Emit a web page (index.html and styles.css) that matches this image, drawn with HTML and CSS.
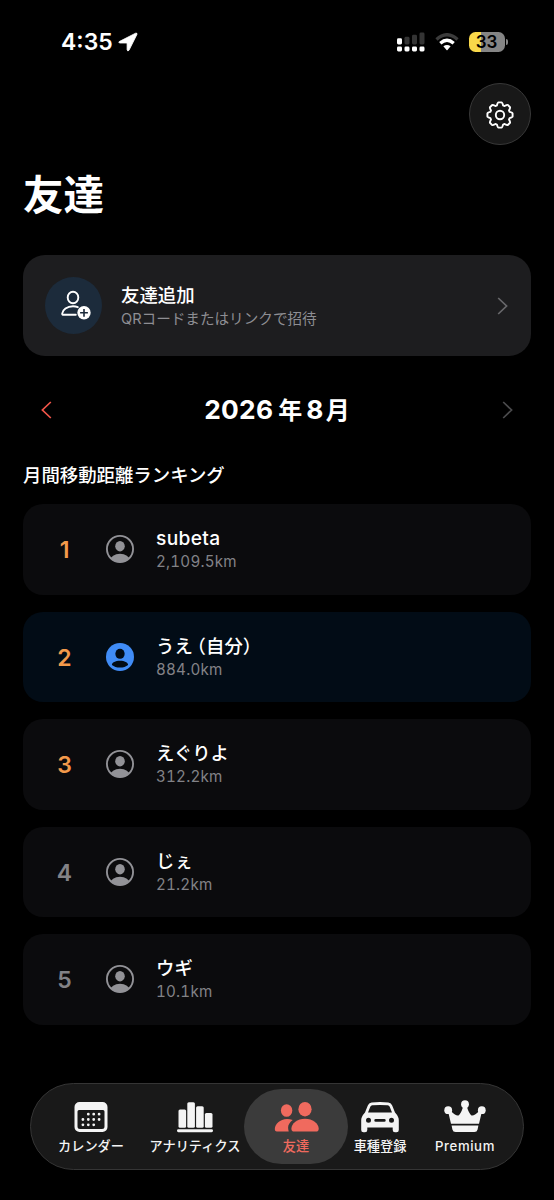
FILE: index.html
```html
<!DOCTYPE html>
<html lang="ja">
<head>
<meta charset="utf-8">
<meta name="viewport" content="width=device-width">
<title>友達</title>
<link rel="stylesheet" href="styles.css">
</head>
<body>
<svg width="0" height="0" class="defs">
  <symbol id="person-outline" viewBox="0 0 27 27">
    <clipPath id="avatar-clip"><circle cx="13.5" cy="13.5" r="12.7"/></clipPath>
    <circle cx="13.5" cy="13.5" r="12.6" fill="none" stroke="currentColor" stroke-width="1.8"/>
    <g clip-path="url(#avatar-clip)" fill="currentColor"><ellipse cx="13.5" cy="10.8" rx="4.6" ry="5"/><ellipse cx="13.5" cy="24.5" rx="9.4" ry="6.3"/></g>
  </symbol>
  <symbol id="person-filled" viewBox="0 0 27 27">
    <circle cx="13.5" cy="13.5" r="13.5" fill="currentColor"/>
    <g fill="#020c16"><ellipse cx="13.5" cy="10.4" rx="4.5" ry="4.9"/><path d="M5.7 21.2c0-2.4 3.4-4 7.8-4s7.8 1.6 7.8 4c-2 1.600-4.500 2.500-7.800 2.500s-5.800-.9-7.800-2.500z"/></g>
  </symbol>
</svg>
<div class="screen">
  <header class="status">
    <div class="clock">4:35
      <svg class="location" width="20" height="20" viewBox="0 0 20 20"><path d="M1.200 9.600 17.600 1.200q1.900-.5 1.300 1.300L11 18.300q-1.400 1.600-1.900-.6V11.800q0-.8-.8-.8H2q-2-.3-.8-1.400z" fill="#fff" stroke="#fff" stroke-width=".8" stroke-linejoin="round"/></svg>
    </div>
    <div class="indicators">
      <svg width="28" height="20" viewBox="0 0 28 20">
        <g fill="#fff"><rect y="14.500" width="5" height="5" rx="1.400"/><rect x="7.500" y="14.500" width="5" height="5" rx="1.400"/><rect x="15" y="14.500" width="5" height="5" rx="1.400"/><rect x="22.500" y="14.500" width="5" height="5" rx="1.400"/><rect y="6.200" width="5" height="6.200" rx="1.400"/></g>
        <g fill="#343434"><rect x="7.500" y="4.800" width="5" height="7.600" rx="1.400"/><rect x="15" y="2.800" width="5" height="9.600" rx="1.400"/><rect x="22.500" y=".5" width="5" height="11.900" rx="1.400"/></g>
      </svg>
      <svg width="24" height="18" viewBox="0 0 24 18" fill="none">
        <path d="M1.500 6.400Q12-3 22.500 6.400" stroke="#3b3b3b" stroke-width="3.300"/>
        <path d="M5.300 10.300Q12 4.300 18.700 10.300" stroke="#fff" stroke-width="3.300"/>
        <path d="M8.400 13.300Q12 10.600 15.600 13.300L12.500 16.900q-.5.500-1 0z" fill="#fff"/>
      </svg>
      <div class="battery"><span class="battery-body">33</span><span class="battery-tip"></span></div>
    </div>
  </header>

  <div class="toolbar">
    <button class="settings" aria-label="設定">
      <svg width="28" height="28" viewBox="-14 -14 28 28" fill="none" stroke="#fff" stroke-width="1.900" stroke-linejoin="round">
        <path d="M-3.100-9.600Q-2.300-12.600-1.600-12.600H1.600Q2.300-12.600 3.100-9.600L4.600-8.980Q7.300-10.540 7.780-10.040L10.040-7.780Q10.540-7.300 8.980-4.600L9.600-3.100Q12.600-2.300 12.600-1.600V1.600Q12.600 2.300 9.600 3.100L8.980 4.600Q10.540 7.300 10.040 7.780L7.780 10.040Q7.300 10.540 4.600 8.980L3.100 9.600Q2.300 12.600 1.600 12.600H-1.600Q-2.300 12.600-3.100 9.600L-4.600 8.980Q-7.300 10.540-7.780 10.040L-10.040 7.780Q-10.540 7.300-8.980 4.600L-9.600 3.100Q-12.600 2.300-12.600 1.600V-1.600Q-12.600-2.300-9.600-3.100L-8.980-4.600Q-10.540-7.300-10.040-7.780L-7.780-10.040Q-7.300-10.540-4.600-8.980Z"/>
        <circle r="4.200"/>
      </svg>
    </button>
  </div>

  <h1 class="title">友達</h1>

  <a class="invite">
    <span class="invite-icon">
      <svg width="32" height="32" viewBox="0 0 32 32" fill="none" stroke="#fff" stroke-width="1.900">
        <ellipse cx="13" cy="7.500" rx="5.300" ry="5.800"/>
        <path d="M17.800 17.200Q15.600 16.200 13 16.200C7 16.200 2.500 20 2.200 23.500Q2.100 24.800 3.500 24.800H15.800" stroke-linecap="round"/>
        <circle cx="24" cy="22.800" r="6.700" fill="#fff" stroke="none"/>
        <path d="M24 18.900v7.800M20.100 22.800h7.800" stroke="#1c2b3b" stroke-width="1.600"/>
      </svg>
    </span>
    <span class="invite-text"><strong>友達追加</strong><small>QRコードまたはリンクで招待</small></span>
    <svg class="chevron" width="11" height="18" viewBox="0 0 11 18"><path d="M1.200 1 9.600 9 1.200 17"/></svg>
  </a>

  <nav class="month">
    <svg class="chevron previous" width="11" height="18" viewBox="0 0 11 18"><path d="M9.800 1 1.400 9 9.800 17"/></svg>
    <h2><span>2026</span><span class="unit year">年</span><span>8</span><span class="unit">月</span></h2>
    <svg class="chevron next" width="11" height="18" viewBox="0 0 11 18"><path d="M1.200 1 9.600 9 1.200 17"/></svg>
  </nav>

  <h3 class="section-title">月間移動距離ランキング</h3>
  <ol class="ranking">
    <li class="entry top"><span class="rank">1</span><svg class="avatar"><use href="#person-outline"/></svg><div class="person"><strong class="latin-name">subeta</strong><small>2,109.5km</small></div></li>
    <li class="entry top self"><span class="rank">2</span><svg class="avatar"><use href="#person-filled"/></svg><div class="person"><strong>うえ<span class="paren">（</span>自分<span class="paren-end">）</span></strong><small>884.0km</small></div></li>
    <li class="entry top"><span class="rank">3</span><svg class="avatar"><use href="#person-outline"/></svg><div class="person"><strong>えぐりよ</strong><small>312.2km</small></div></li>
    <li class="entry"><span class="rank">4</span><svg class="avatar"><use href="#person-outline"/></svg><div class="person"><strong>じぇ</strong><small>21.2km</small></div></li>
    <li class="entry"><span class="rank">5</span><svg class="avatar"><use href="#person-outline"/></svg><div class="person"><strong>ウギ</strong><small>10.1km</small></div></li>
  </ol>

  <nav class="tabs">
    <a class="tab">
      <svg width="46" height="34" viewBox="0 0 46 34">
        <path fill-rule="evenodd" fill="#f4f4f4" d="M11.500 2h23a5 5 0 0 1 5 5v20a5 5 0 0 1-5 5h-23a5 5 0 0 1-5-5V7a5 5 0 0 1 5-5zM9.500 11.500V26.500a2.500 2.500 0 0 0 2.500 2.500h22a2.500 2.500 0 0 0 2.500-2.500V11.500q0-1.500-1.500-1.500H11q-1.500 0-1.500 1.500z"/>
        <path d="M20.300 14.200h.01M25.700 14.200h.01M31.100 14.200h.01M14.900 19.500h.01M20.300 19.500h.01M25.700 19.500h.01M31.100 19.500h.01M14.900 24.800h.01M20.300 24.800h.01M25.700 24.800h.01" stroke="#f4f4f4" stroke-width="2.800" stroke-linecap="round"/>
      </svg><span>カレンダー</span>
    </a>
    <a class="tab">
      <svg width="46" height="34" viewBox="0 0 46 34" fill="#f4f4f4"><rect x="6.500" y="9.500" width="7.600" height="18.300" rx="1.500"/><rect x="15.300" y="2.200" width="7.600" height="25.600" rx="1.500"/><rect x="24.100" y="6.200" width="7.600" height="21.600" rx="1.500"/><rect x="32.900" y="13" width="7.600" height="14.800" rx="1.500"/><rect x="5" y="29.300" width="36" height="2.900" rx="1.400"/></svg>
      <span>アナリティクス</span>
    </a>
    <a class="tab active">
      <svg width="46" height="34" viewBox="0 0 46 34" fill="#f06a5e"><ellipse cx="13.600" cy="10.500" rx="5.700" ry="6.300"/><ellipse cx="32" cy="9.200" rx="6.600" ry="7.200"/><path d="M14 18.900q3 0 5.700 1.100-4.600 3.600-4.600 7.600 0 1.700.6 4H3.800Q1.800 31.600 1.800 29.200C1.800 24 7 18.900 14 18.900z"/><path d="M32 18.700c7.500 0 13.700 5 13.700 9.800 0 2.200-.7 3.100-2.900 3.100H21.300c-2.200 0-2.900-.9-2.900-3.100 0-4.800 6-9.800 13.600-9.800z"/></svg>
      <span>友達</span>
    </a>
    <a class="tab">
      <svg width="46" height="34" viewBox="0 0 46 34" fill="#f4f4f4"><path fill-rule="evenodd" d="M10.700 5.700Q11.700 2.900 14.600 2.400Q23 1.500 31.400 2.400Q34.300 2.900 35.300 5.700L38 12.500Q41.800 16.700 41.800 20V30q0 2.300-2.300 2.300H38q-2.300 0-2.300-2.300V27.500H10.300V30q0 2.300-2.300 2.300H6.500Q4.200 32.300 4.200 30V20Q4.200 16.700 8 12.500zM13.300 6.700 11 12.500H35L32.700 6.700Q32.200 5.300 30.700 5.200Q23 4.600 15.300 5.200Q13.800 5.300 13.300 6.700zM11.500 17.800a2.500 2.500 0 1 0 0 5 2.500 2.500 0 1 0 0-5zM34.500 17.800a2.500 2.500 0 1 0 0 5 2.500 2.500 0 1 0 0-5zM18.700 19a1.400 1.400 0 0 0 0 2.800h8.600a1.400 1.400 0 0 0 0-2.800z"/></svg>
      <span>車種登録</span>
    </a>
    <a class="tab">
      <svg width="46" height="34" viewBox="0 0 46 34" fill="#f4f4f4"><circle cx="23" cy="4.200" r="3.900"/><circle cx="6.200" cy="10.200" r="3.900"/><circle cx="39.800" cy="10.200" r="3.900"/><path d="M21.200 6.500h3.600Q27 13.800 29.500 15.400Q32 16.200 36.700 11.500L39.500 13.300 37 23.800H9L6.500 13.300 9.300 11.500Q14 16.200 16.500 15.400Q19 13.800 21.200 6.500zM9.600 25.500h26.800l-.8 4Q35 32 32.400 32H13.600Q11 32 10.400 29.500z"/></svg>
      <span class="latin">Premium</span>
    </a>
  </nav>
</div>
</body>
</html>
```

FILE: styles.css
```css
* { box-sizing: border-box; }
body {
  margin: 0;
  background: #000;
  color: #fff;
  font-family: Inter, "Noto Sans CJK JP", sans-serif;
}
.defs { display: block; height: 0; }
.screen {
  width: 554px;
  height: 1200px;
  padding: 0 23px;
  display: flex;
  flex-direction: column;
}
.status {
  height: 83px;
  padding: 0 23px 0 38px;
  display: flex;
  align-items: center;
  justify-content: space-between;
}
.clock { display: flex; align-items: center; gap: 5px; font-size: 23px; font-weight: 600; }
.indicators { display: flex; align-items: center; gap: 10px; }
.battery { display: flex; align-items: center; gap: 1.500px; }
.battery-body {
  width: 36px;
  height: 20px;
  border-radius: 6.500px;
  background: linear-gradient(90deg, #f9d84a 33%, #858585 33%);
  color: #000;
  font-size: 17px;
  line-height: 20px;
  font-weight: 600;
  text-align: center;
}
.battery-tip { width: 2px; height: 6px; border-radius: 0 3px 3px 0; background: #858585; }
.toolbar { display: flex; justify-content: flex-end; }
.settings {
  width: 62px;
  height: 62px;
  padding: 2px 0 0;
  border: 1px solid #383838;
  border-radius: 50%;
  background: #181818;
  display: grid;
  place-items: center;
}
.title { margin: 21px 0 0; height: 59px; font-size: 40.500px; line-height: 59px; font-weight: 700; }
.invite {
  margin-top: 30px;
  height: 101px;
  padding: 0 23px 0 22px;
  border-radius: 22px;
  background: #1d1d1f;
  display: flex;
  align-items: center;
}
.invite-icon {
  width: 57px;
  height: 57px;
  padding-left: 4px;
  border-radius: 50%;
  background: #1c2b3b;
  display: grid;
  place-items: center;
}
.invite-text { margin-left: 19px; flex: 1; display: flex; flex-direction: column; }
.invite-text strong { font-size: 18.4px; line-height: 26px; font-weight: 500; }
.invite-text small { padding-top: 1px; font-size: 14.600px; line-height: 21px; color: #8e8e93; font-weight: 400; }
.chevron { fill: none; stroke: #68686b; stroke-width: 1.700; }
.month {
  margin-top: 30px;
  height: 48px;
  padding: 0 18px;
  display: flex;
  align-items: center;
  justify-content: space-between;
}
.month h2 { margin: 0; padding-top: 1px; display: flex; align-items: baseline; gap: 2px; font-size: 26.300px; line-height: 40px; font-weight: 700; letter-spacing: .3px; }
.month .unit { font-size: 24px; letter-spacing: 0; }
.month .year { margin: 0 2px 0 3px; }
.month .previous { stroke: #f25549; }
.month .next { stroke: #4b4b4d; }
.section-title { margin: 27px 0 0; height: 43px; font-size: 18.4px; line-height: 28px; font-weight: 500; }
.ranking { list-style: none; margin: 0; padding: 0; display: flex; flex-direction: column; gap: 17px; }
.entry {
  height: 90.5px;
  border-radius: 20px;
  background: #0b0b0d;
  display: flex;
  align-items: center;
}
.rank { width: 83px; padding-top: 2px; text-align: center; font-size: 23px; font-weight: 600; color: #828286; }
.top .rank { color: #f39a4b; }
.avatar { width: 28px; height: 28px; color: #929297; }
.person { margin-left: 22px; display: flex; flex-direction: column; }
.person strong { font-size: 18.400px; line-height: 26px; font-weight: 500; }
.person .latin-name { font-size: 19.200px; letter-spacing: .3px; }
.person small { font-size: 15.200px; line-height: 22px; letter-spacing: .2px; font-variant-numeric: tabular-nums; color: #828287; }
.paren, .paren-end { font-feature-settings: "halt"; }
.paren { margin-left: 4px; }
.self { background: #020c16; }
.self .avatar { color: #408cf6; }
.tabs {
  margin: 58px 7px 0;
  height: 87px;
  flex: none;
  padding: 0 5px;
  border: 1px solid #353535;
  border-radius: 44px;
  background: #191919;
  display: grid;
  grid-template-columns: 110px 98px 104px 64px 106px;
  align-items: center;
}
.tab {
  height: 75px;
  padding-top: 11px;
  display: flex;
  flex-direction: column;
  align-items: center;
  color: #f4f4f4;
  font-size: 13.2px;
  line-height: 20px;
  font-weight: 500;
  white-space: nowrap;
}
.tab svg { flex: none; }
.tab span { margin-top: 2px; }
.latin { letter-spacing: .6px; }
.active { border-radius: 38px; background: #3b3b3b; color: #f06a5e; }
```
